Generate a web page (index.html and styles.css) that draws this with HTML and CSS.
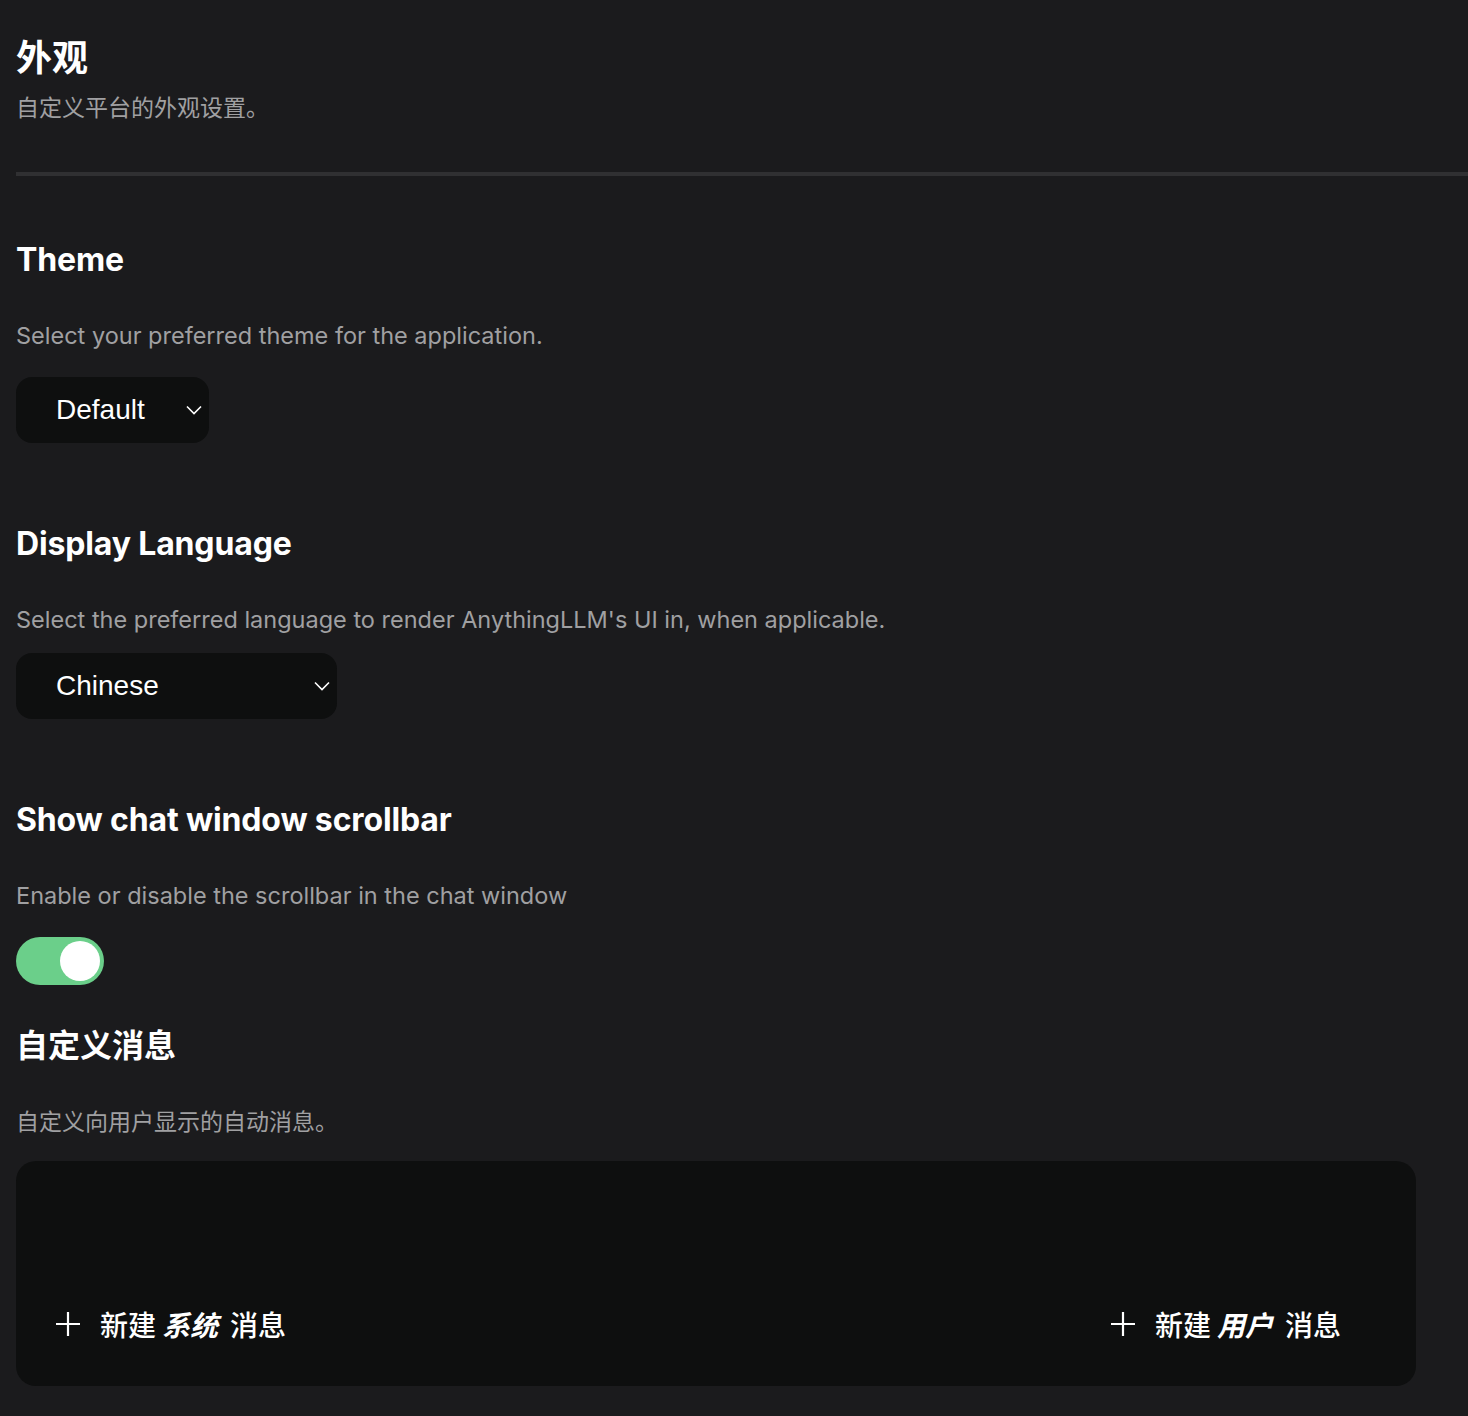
FILE: index.html
```html
<!DOCTYPE html>
<html lang="zh">
<head>
<meta charset="utf-8">
<title>外观</title>
<link rel="stylesheet" href="styles.css">
</head>
<body>
<div class="page">
  <header class="header">
    <h1 class="page-title">外观</h1>
    <p class="page-sub">自定义平台的外观设置。</p>
  </header>
  <div class="divider"></div>

  <section class="section s-theme">
    <h2 class="sec-title">Theme</h2>
    <p class="sec-desc">Select your preferred theme for the application.</p>
    <div class="select select-theme">
      <span class="select-text">Default</span>
      <svg class="chev" width="16" height="10" viewBox="0 0 16 10"><path d="M1 1.5 L8 8.5 L15 1.5" fill="none" stroke="#fff" stroke-width="1.6"/></svg>
    </div>
  </section>

  <section class="section s-lang">
    <h2 class="sec-title">Display Language</h2>
    <p class="sec-desc">Select the preferred language to render AnythingLLM's UI in, when applicable.</p>
    <div class="select select-lang">
      <span class="select-text">Chinese</span>
      <svg class="chev" width="16" height="10" viewBox="0 0 16 10"><path d="M1 1.5 L8 8.5 L15 1.5" fill="none" stroke="#fff" stroke-width="1.6"/></svg>
    </div>
  </section>

  <section class="section s-scroll">
    <h2 class="sec-title">Show chat window scrollbar</h2>
    <p class="sec-desc">Enable or disable the scrollbar in the chat window</p>
    <div class="toggle"><div class="knob"></div></div>
  </section>

  <section class="section s-msg">
    <h2 class="sec-title cjk">自定义消息</h2>
    <p class="sec-desc cjk">自定义向用户显示的自动消息。</p>
    <div class="msg-box">
      <div class="msg-actions">
        <button class="msg-btn">
          <svg class="plus" width="26" height="26" viewBox="0 0 26 26"><path d="M13 1 V25 M1 13 H25" stroke="#fff" stroke-width="2.2" fill="none"/></svg>
          <span class="btn-text">新建<em>系统</em>消息</span>
        </button>
        <button class="msg-btn">
          <svg class="plus" width="26" height="26" viewBox="0 0 26 26"><path d="M13 1 V25 M1 13 H25" stroke="#fff" stroke-width="2.2" fill="none"/></svg>
          <span class="btn-text">新建<em>用户</em>消息</span>
        </button>
      </div>
    </div>
  </section>
</div>
</body>
</html>
```

FILE: styles.css
```css
* { box-sizing: border-box; }
html, body {
  margin: 0;
  padding: 0;
  background: #1b1b1d;
  height: 100%;
}
body {
  font-family: Inter, "Noto Sans CJK SC", sans-serif;
  color: #ffffff;
  overflow: hidden;
}
.page {
  padding: 33px 0 0 16px;
}
.header {
  display: flex;
  flex-direction: column;
}
.page-title {
  margin: 0;
  font-family: "Noto Sans CJK SC", sans-serif;
  font-size: 36px;
  line-height: 44px;
  font-weight: 700;
}
.page-sub {
  margin: 14px 0 0 0;
  font-family: "Noto Sans CJK SC", sans-serif;
  font-size: 23px;
  line-height: 30px;
  color: #a0a0a2;
}
.divider {
  margin-top: 51px;
  height: 4px;
  background: #303032;
}
.section {
  display: flex;
  flex-direction: column;
  align-items: flex-start;
}
.s-theme { margin-top: 64px; }
.s-lang { margin-top: 81px; }
.s-scroll { margin-top: 81px; }
.s-msg { margin-top: 38px; }
.sec-title {
  margin: 0;
  font-size: 32px;
  line-height: 40px;
  font-weight: 700;
  letter-spacing: -0.15px;
}
.sec-title.cjk {
  font-family: "Noto Sans CJK SC", sans-serif;
  letter-spacing: 0;
}
.sec-desc {
  margin: 41px 0 0 0;
  font-size: 23.5px;
  line-height: 30px;
  color: #a0a0a2;
  letter-spacing: 0;
}
.sec-desc.cjk {
  font-family: "Noto Sans CJK SC", sans-serif;
  font-size: 23px;
  margin-top: 42px;
}
.select {
  margin-top: 26px;
  height: 66px;
  background: #0e0f0f;
  border-radius: 16px;
  display: flex;
  align-items: center;
  padding-left: 40px;
}
.s-lang .select { margin-top: 18px; }
.select-theme { width: 193px; }
.select-lang { width: 321px; }
.select-text {
  font-family: "Liberation Sans", Arial, sans-serif;
  font-size: 28px;
  color: #fff;
  flex: 1;
}
.chev {
  margin-right: 7px;
  width: 16px;
  height: 10px;
}
.toggle {
  margin-top: 26px;
  width: 88px;
  height: 48px;
  border-radius: 24px;
  background: #6bcf8a;
  padding: 4px;
  display: flex;
  justify-content: flex-end;
}
.knob {
  width: 40px;
  height: 40px;
  border-radius: 50%;
  background: #ffffff;
}
.msg-box {
  margin-top: 26px;
  width: 1400px;
  height: 225px;
  background: #0e0f0f;
  border-radius: 20px;
  display: flex;
  flex-direction: column;
  justify-content: flex-end;
  padding: 0 75px 47px 39px;
}
.msg-actions {
  display: flex;
  justify-content: space-between;
  align-items: center;
}
.msg-btn {
  background: none;
  border: 0;
  padding: 0;
  color: #fff;
  display: flex;
  align-items: center;
  gap: 19px;
  cursor: pointer;
}
.plus { width: 26px; height: 26px; }
.btn-text {
  font-family: "Noto Sans CJK SC", sans-serif;
  font-size: 28px;
  line-height: 30px;
  font-weight: 500;
  white-space: pre;
}
.btn-text em {
  font-style: italic;
  font-weight: 700;
  margin: 0 12px 0 6px;
}
```
